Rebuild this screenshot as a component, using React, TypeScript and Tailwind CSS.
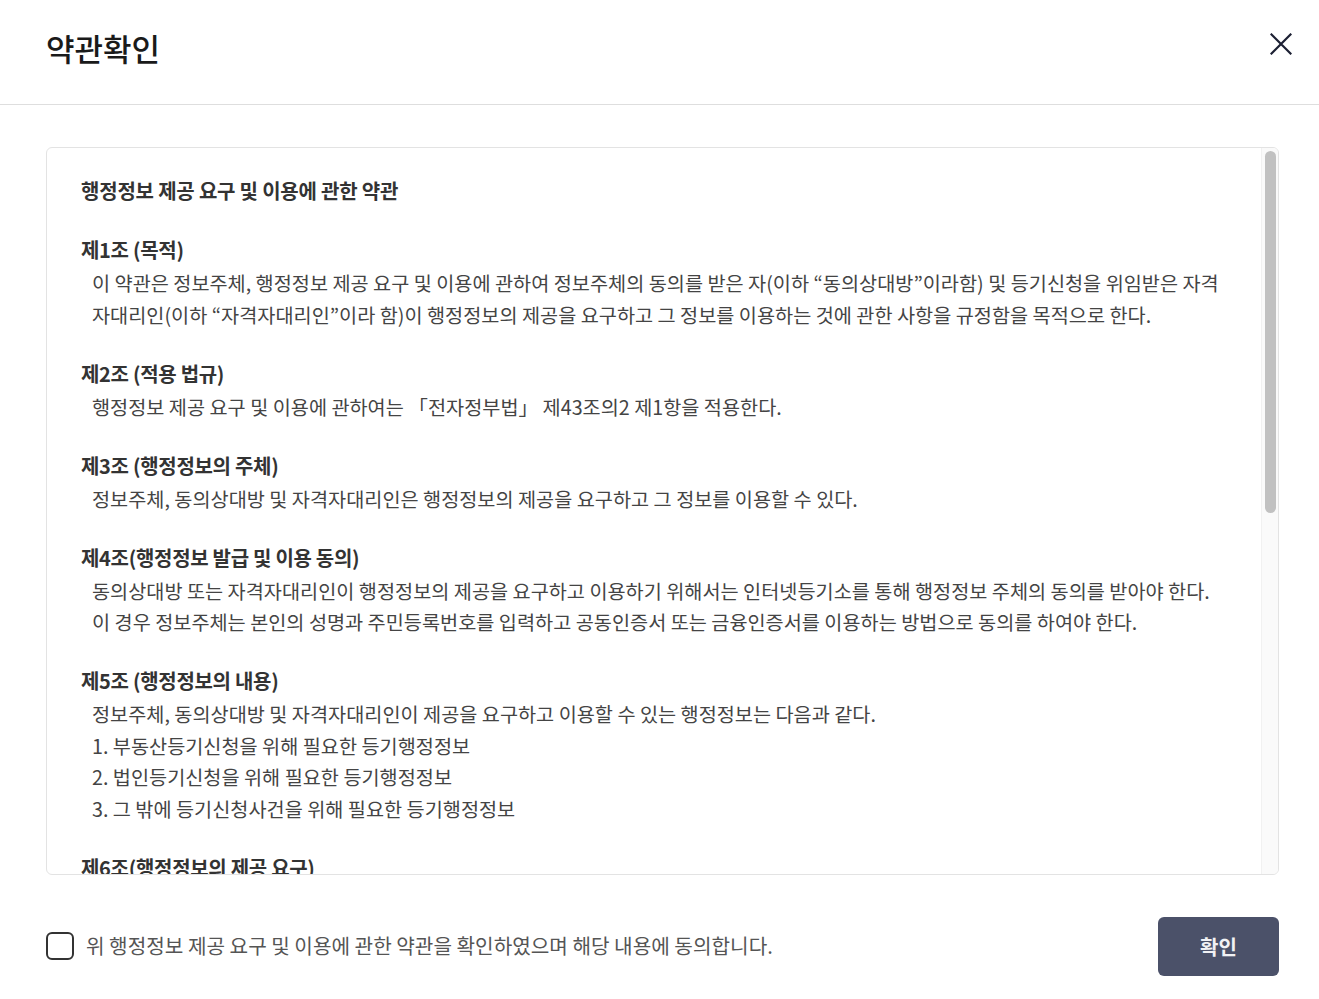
import React from "react";

const sections: { title: string; lines: string[] }[] = [
  {
    title: "제1조 (목적)",
    lines: [
      "이 약관은 정보주체, 행정정보 제공 요구 및 이용에 관하여 정보주체의 동의를 받은 자(이하 “동의상대방”이라함) 및 등기신청을 위임받은 자격",
      "자대리인(이하 “자격자대리인”이라 함)이 행정정보의 제공을 요구하고 그 정보를 이용하는 것에 관한 사항을 규정함을 목적으로 한다.",
    ],
  },
  {
    title: "제2조 (적용 법규)",
    lines: ["행정정보 제공 요구 및 이용에 관하여는 「전자정부법」 제43조의2 제1항을 적용한다."],
  },
  {
    title: "제3조 (행정정보의 주체)",
    lines: ["정보주체, 동의상대방 및 자격자대리인은 행정정보의 제공을 요구하고 그 정보를 이용할 수 있다."],
  },
  {
    title: "제4조(행정정보 발급 및 이용 동의)",
    lines: [
      "동의상대방 또는 자격자대리인이 행정정보의 제공을 요구하고 이용하기 위해서는 인터넷등기소를 통해 행정정보 주체의 동의를 받아야 한다.",
      "이 경우 정보주체는 본인의 성명과 주민등록번호를 입력하고 공동인증서 또는 금융인증서를 이용하는 방법으로 동의를 하여야 한다.",
    ],
  },
  {
    title: "제5조 (행정정보의 내용)",
    lines: [
      "정보주체, 동의상대방 및 자격자대리인이 제공을 요구하고 이용할 수 있는 행정정보는 다음과 같다.",
      "1. 부동산등기신청을 위해 필요한 등기행정정보",
      "2. 법인등기신청을 위해 필요한 등기행정정보",
      "3. 그 밖에 등기신청사건을 위해 필요한 등기행정정보",
    ],
  },
  {
    title: "제6조(행정정보의 제공 요구)",
    lines: [
      "동의상대방 또는 자격자대리인은 정보주체의 동의를 받은 후 행정정보의 제공을 요구할 수 있다.",
    ],
  },
];

export default function App() {
  return (
    <div className="w-[1319px] h-[999px] bg-white flex flex-col font-['Noto_Sans_CJK_KR',_'Noto_Sans',_sans-serif] overflow-hidden">
      {/* header */}
      <div className="h-[105px] shrink-0 border-b border-[#dedede] flex items-start justify-between pl-[46px] pr-[27px]">
        <h1 className="mt-[28px] text-[31px] leading-[40px] font-medium text-[#1a1a1a]">약관확인</h1>
        <button className="mt-[33px] w-[22px] h-[22px] text-[#1c2033]">
          <svg viewBox="0 0 22 22" width="22" height="22" fill="none" stroke="currentColor" strokeWidth="2.2" strokeLinecap="square">
            <path d="M1.5 1.5 L20.5 20.5 M20.5 1.5 L1.5 20.5" />
          </svg>
        </button>
      </div>

      {/* terms box */}
      <div className="mt-[42px] ml-[46px] mr-[40px] h-[728px] shrink-0 relative border border-[#e3e3e3] rounded-[6px] overflow-hidden">
        <div className="pt-[27px] pl-[34px] pr-[60px] text-[#444]">
          <div className="text-[20px] leading-[32px] font-bold text-[#333] mb-[27px] tracking-[-0.2px]">
            행정정보 제공 요구 및 이용에 관한 약관
          </div>
          {sections.map((s) => (
            <div key={s.title} className="mb-[27.5px]">
              <div className="text-[20px] leading-[32px] font-bold text-[#333] tracking-[-0.3px]">{s.title}</div>
              <div className="mt-[1px] pl-[11px] text-[19.7px] leading-[31.5px]">
                {s.lines.map((l) => (
                  <div key={l} className="whitespace-nowrap">{l}</div>
                ))}
              </div>
            </div>
          ))}
        </div>
        {/* scrollbar */}
        <div className="absolute top-0 bottom-0 right-0 w-[17px] bg-[#fafafa] border-l border-[#f1f1f1]">
          <div className="absolute top-[3px] left-[3px] w-[11px] h-[362px] rounded-full bg-[#c1c1c1]" />
        </div>
      </div>

      {/* footer */}
      <div className="flex-1 flex items-center justify-between pl-[46px] pr-[40px] pt-[19px]">
        <label className="flex items-center gap-[12px]">
          <span className="w-[28px] h-[28px] rounded-[6px] border-2 border-[#333] bg-white" />
          <span className="text-[20.2px] text-[#555]">
            위 행정정보 제공 요구 및 이용에 관한 약관을 확인하였으며 해당 내용에 동의합니다.
          </span>
        </label>
        <button className="w-[121px] h-[59px] rounded-[6px] bg-[#4b5169] text-[#f1f1f4] text-[20px] font-bold">
          확인
        </button>
      </div>
    </div>
  );
}
